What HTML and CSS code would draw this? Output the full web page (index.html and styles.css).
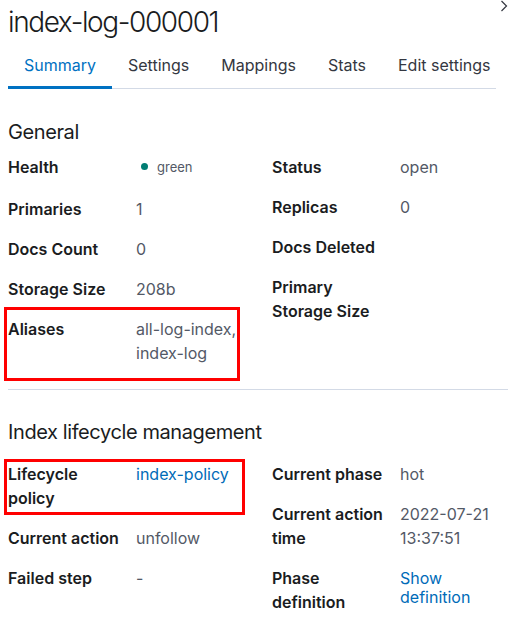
FILE: index.html
```html
<!DOCTYPE html>
<html lang="en">
<head>
    <meta charset="UTF-8">
    <title>index-log-000001</title>
    <link rel="stylesheet" href="styles.css">
</head>
<body>
    <div class="flyout">
        <button class="close" aria-label="Close">
            <svg width="8" height="12" viewBox="0 0 8 12"><path d="M1.5 1 L6.5 6 L1.5 11" fill="none" stroke="#343741" stroke-width="1.2"/></svg>
        </button>

        <h1 class="title">index-log-000001</h1>

        <nav class="tabs">
            <a class="tab active">Summary</a>
            <a class="tab">Settings</a>
            <a class="tab">Mappings</a>
            <a class="tab">Stats</a>
            <a class="tab">Edit settings</a>
        </nav>

        <!-- General -->
        <section class="section">
            <h2>General</h2>
            <div class="columns">
                <dl class="list">
                    <dt>Health</dt>
                    <dd class="health"><span class="dot"></span>green</dd>
                    <dt>Primaries</dt>
                    <dd>1</dd>
                    <dt>Docs Count</dt>
                    <dd>0</dd>
                    <dt>Storage Size</dt>
                    <dd>208b</dd>
                    <dt class="marked">Aliases</dt>
                    <dd>all-log-index,<br>index-log</dd>
                </dl>
                <dl class="list">
                    <dt>Status</dt>
                    <dd>open</dd>
                    <dt>Replicas</dt>
                    <dd>0</dd>
                    <dt>Docs Deleted</dt>
                    <dd></dd>
                    <dt>Primary<br>Storage Size</dt>
                    <dd></dd>
                </dl>
            </div>
        </section>

        <hr class="rule">

        <!-- ILM -->
        <section class="section ilm">
            <h2>Index lifecycle management</h2>
            <div class="columns">
                <dl class="list">
                    <dt class="marked marked-ilm">Lifecycle<br>policy</dt>
                    <dd><a class="link">index-policy</a></dd>
                    <dt>Current action</dt>
                    <dd>unfollow</dd>
                    <dt>Failed step</dt>
                    <dd>-</dd>
                </dl>
                <dl class="list">
                    <dt>Current phase</dt>
                    <dd>hot</dd>
                    <dt>Current action<br>time</dt>
                    <dd>2022-07-21<br>13:37:51</dd>
                    <dt>Phase<br>definition</dt>
                    <dd><a class="link link-block">Show<br>definition</a></dd>
                </dl>
            </div>
        </section>
    </div>
</body>
</html>
```

FILE: styles.css
```css
/* Base */
* {
    margin: 0;
    padding: 0;
    box-sizing: border-box;
}

body {
    font-family: 'Inter', sans-serif;
    background: #ffffff;
    color: #1a1c21;
}

.flyout {
    position: relative;
    padding: 0 12px 0 8px;
}

/* Close */
.close {
    position: absolute;
    top: 0;
    right: 0;
    border: none;
    background: none;
    width: 8px;
    height: 12px;
}

/* Title */
.title {
    font-size: 28px;
    font-weight: 300;
    line-height: 44px;
    letter-spacing: -0.05em;
    color: #1a1c21;
}

/* Tabs */
.tabs {
    display: flex;
    margin-top: 1px;
    padding-bottom: 3px;
    border-bottom: 1px solid #d3dae6;
}

.tab {
    flex-shrink: 0;
    white-space: nowrap;
    padding: 0 16px;
    font-size: 16px;
    line-height: 40px;
    color: #343741;
    position: relative;
    cursor: pointer;
}

.tab.active {
    color: #0071c2;
}

.tab.active:after {
    content: '';
    position: absolute;
    left: 0;
    right: 0;
    bottom: -4px;
    height: 3px;
    background: #0071c2;
}

/* Sections */
.section h2 {
    font-size: 20px;
    font-weight: 400;
    line-height: 24px;
    letter-spacing: -0.02em;
    margin: 31px 0 11px;
}

.columns {
    display: flex;
}

.list {
    display: grid;
    grid-template-columns: 128px 1fr;
    row-gap: 16px;
    align-content: start;
    font-size: 16px;
    line-height: 24px;
}

.list:first-child {
    width: 264px;
}

.list:last-child {
    flex: 1;
}

dt {
    font-weight: 600;
    color: #1a1c21;
    position: relative;
}

dd {
    color: #535966;
}

.health {
    display: flex;
    align-items: center;
    height: 26px;
    padding-bottom: 3px;
    font-size: 13px;
}

.dot {
    width: 7px;
    height: 7px;
    border-radius: 50%;
    background: #017d73;
    margin: 0 9px 0 5px;
}

.link {
    color: #006bb8;
}

.link-block {
    display: block;
    padding-top: 3px;
    line-height: 19px;
}

/* Annotations */
.marked:before {
    content: '';
    box-sizing: border-box;
    position: absolute;
    left: -4px;
    top: -10px;
    width: 236px;
    height: 74px;
    border: 3px solid #ff0000;
}

.marked-ilm:before {
    top: -3px;
    width: 241px;
    height: 56px;
}

.rule {
    border: none;
    border-top: 1px solid #d3dae6;
    margin: 24px -12px 0 0;
}

.ilm h2 {
    margin: 30px 0 18px;
}
```
